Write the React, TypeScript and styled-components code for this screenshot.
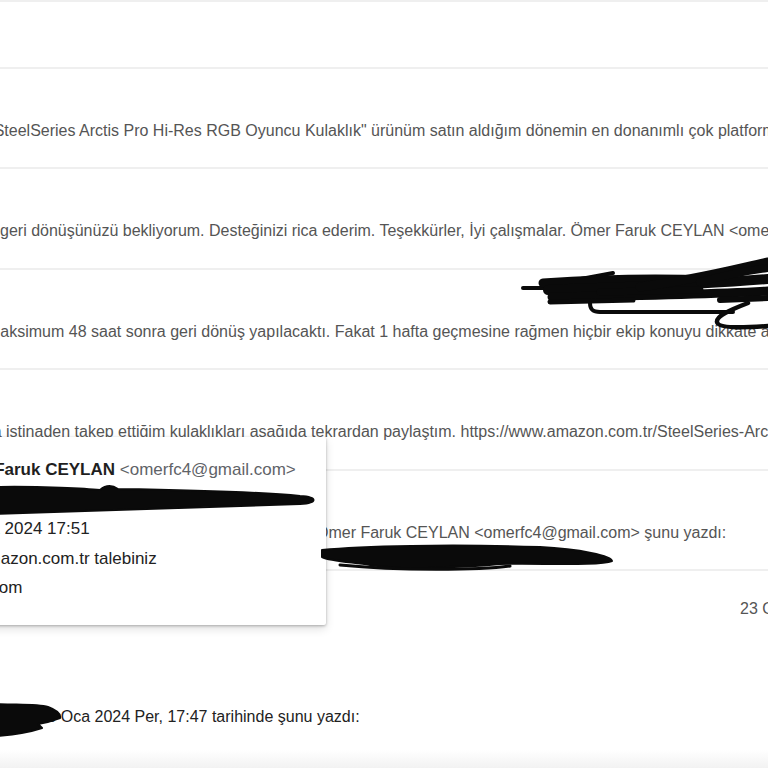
import styled, { createGlobalStyle } from "styled-components";

const GlobalStyle = createGlobalStyle`
  html, body {
    margin: 0;
    padding: 0;
    background: #fff;
  }

  body {
    font-family: "Liberation Sans", Arial, Helvetica, sans-serif;
    overflow: hidden;
  }
`

const Page = styled.div`
  position: relative;
  width: 768px;
  height: 768px;
  overflow: hidden;
  display: flex;
  flex-direction: column;
  background: linear-gradient(to bottom, #fff 0, #fff 750px, #f2f2f2 768px);
`

const TopStrip = styled.div`
  height: 65px;
  border-top: 2px solid #efefef;
  border-bottom: 2px solid #efefef;
  flex-shrink: 0;
`

const MessageRow = styled.div`
  flex-shrink: 0;
  height: 46.4px;
  padding-top: 52px;
  border-bottom: 2px solid #efefef;
`

const Snippet = styled.div<{ $offset: number }>`
  margin-left: ${p => p.$offset}px;
  white-space: nowrap;
  font-size: 16px;
  line-height: 20px;
  color: #555;
`

const DateRow = styled.div`
  padding: 28px 0 0 740px;
  white-space: nowrap;
  font-size: 16px;
  line-height: 20px;
  color: #555;
`

const QuoteLine = styled.div<{ $offset: number }>`
  margin: 88px 0 0 ${p => p.$offset}px;
  white-space: nowrap;
  font-size: 16px;
  line-height: 20px;
  color: #222;
`

const DetailsCard = styled.div`
  position: absolute;
  top: 437px;
  left: -183px;
  width: 509px;
  box-sizing: border-box;
  padding: 18px 16px 22px 24px;
  background: #fff;
  border-radius: 2px;
  box-shadow: 0 1px 3px rgba(0, 0, 0, 0.28), 0 4px 10px rgba(0, 0, 0, 0.12);
  display: grid;
  grid-template-columns: 90px 1fr;
  column-gap: 14px;
  z-index: 1;
`

const Label = styled.div`
  text-align: right;
  font-size: 14px;
  line-height: 29.5px;
  color: #5f6368;
  white-space: nowrap;
`

const Value = styled.div`
  font-size: 17px;
  line-height: 29.5px;
  color: #222;
  white-space: nowrap;

  b {
    font-weight: 700;
    color: #1f1f1f;
  }

  span {
    color: #5f6368;
  }
`

const Scribbles = styled.svg`
  position: absolute;
  inset: 0;
  width: 768px;
  height: 768px;
  pointer-events: none;
  z-index: 2;

  path {
    fill: none;
    stroke: #0a0a0a;
    stroke-linecap: round;
    stroke-linejoin: round;
  }

  path.blot {
    fill: #0a0a0a;
    stroke-width: 2;
  }
`

const rows = [
  { offset: -12, text: '"SteelSeries Arctis Pro Hi-Res RGB Oyuncu Kulaklık" ürünüm satın aldığım dönemin en donanımlı çok platformlu kulaklığıydı.' },
  { offset: 0, text: 'geri dönüşünüzü bekliyorum. Desteğinizi rica ederim. Teşekkürler, İyi çalışmalar. Ömer Faruk CEYLAN <omerfc4@gmail.com>' },
  { offset: -13, text: 'maksimum 48 saat sonra geri dönüş yapılacaktı. Fakat 1 hafta geçmesine rağmen hiçbir ekip konuyu dikkate almadı.' },
  { offset: -34, text: 'buna istinaden takep ettiğim kulaklıkları aşağıda tekrardan paylaştım. https://www.amazon.com.tr/SteelSeries-Arctis-Pro' },
  { offset: 316, text: 'Ömer Faruk CEYLAN <omerfc4@gmail.com> şunu yazdı:' },
]

const App = () => {
  return (
    <Page>
      <GlobalStyle/>
      <TopStrip/>
      {rows.map((row, i) => (
        <MessageRow key={i}>
          <Snippet $offset={row.offset}>{row.text}</Snippet>
        </MessageRow>
      ))}
      <DateRow>23 Oca 2024 Cum, 10:12</DateRow>
      <QuoteLine $offset={-10}>com&gt;, 18 Oca 2024 Per, 17:47 tarihinde şunu yazdı:</QuoteLine>

      <DetailsCard>
        <Label>kimden:</Label>
        <Value><b>Ömer Faruk CEYLAN</b> <span>&lt;omerfc4@gmail.com&gt;</span></Value>
        <Label>alıcı:</Label>
        <Value>destek@amazon.com.tr</Value>
        <Label>tarih:</Label>
        <Value>17 Oca 2024 17:51</Value>
        <Label>konu:</Label>
        <Value>Re: Amazon.com.tr talebiniz</Value>
        <Label>gönderen:</Label>
        <Value>gmail.com</Value>
      </DetailsCard>

      <Scribbles viewBox="0 0 768 768">
        {/* top right */}
        <path d="M523 288 L565 288" strokeWidth={4}/>
        <path d="M570 281 L613 273" strokeWidth={4}/>
        <path d="M543 283 C600 279 660 278 710 280" strokeWidth={9}/>
        <path d="M548 290 C620 287 700 285 768 279" strokeWidth={10}/>
        <path d="M552 297 C620 296 700 295 768 291" strokeWidth={9}/>
        <path d="M600 292 L700 290" strokeWidth={7}/>
        <path d="M640 287 C700 279 740 268 768 262" strokeWidth={9}/>
        <path d="M700 282 C730 274 752 270 768 268" strokeWidth={8}/>
        <path d="M720 300 L768 298" strokeWidth={6}/>
        <path d="M550 302 L633 300" strokeWidth={5}/>
        <path d="M590 303 C590 309 592 312 600 312 L733 312" strokeWidth={4}/>
        <path d="M748 303 C730 310 716 316 717 322 C718 328 740 328 768 326" strokeWidth={4.5}/>
        {/* card */}
        <path className="blot" d="M-5 487 C40 486 90 489 100 490 C106 485 112 485 118 489 C180 490 260 492 300 496 C318 497 318 503 300 504 C220 506 120 510 -5 514 Z"/>
        {/* row 5 */}
        <path className="blot" d="M322 550 C360 546 450 544 540 547 C580 549 612 556 612 561 C600 566 540 563 500 564 C460 568 390 569 370 565 C350 562 330 561 322 557 Z"/>
        <path d="M340 565 C400 571 480 570 510 566" strokeWidth={3}/>
        {/* bottom left */}
        <path className="blot" d="M-5 704 C20 705 38 704 48 707 C56 710 61 714 60 718 C52 721 44 723 38 724 L42 728 C30 732 10 735 -5 736 Z"/>
      </Scribbles>
    </Page>
  )
}

export default App
